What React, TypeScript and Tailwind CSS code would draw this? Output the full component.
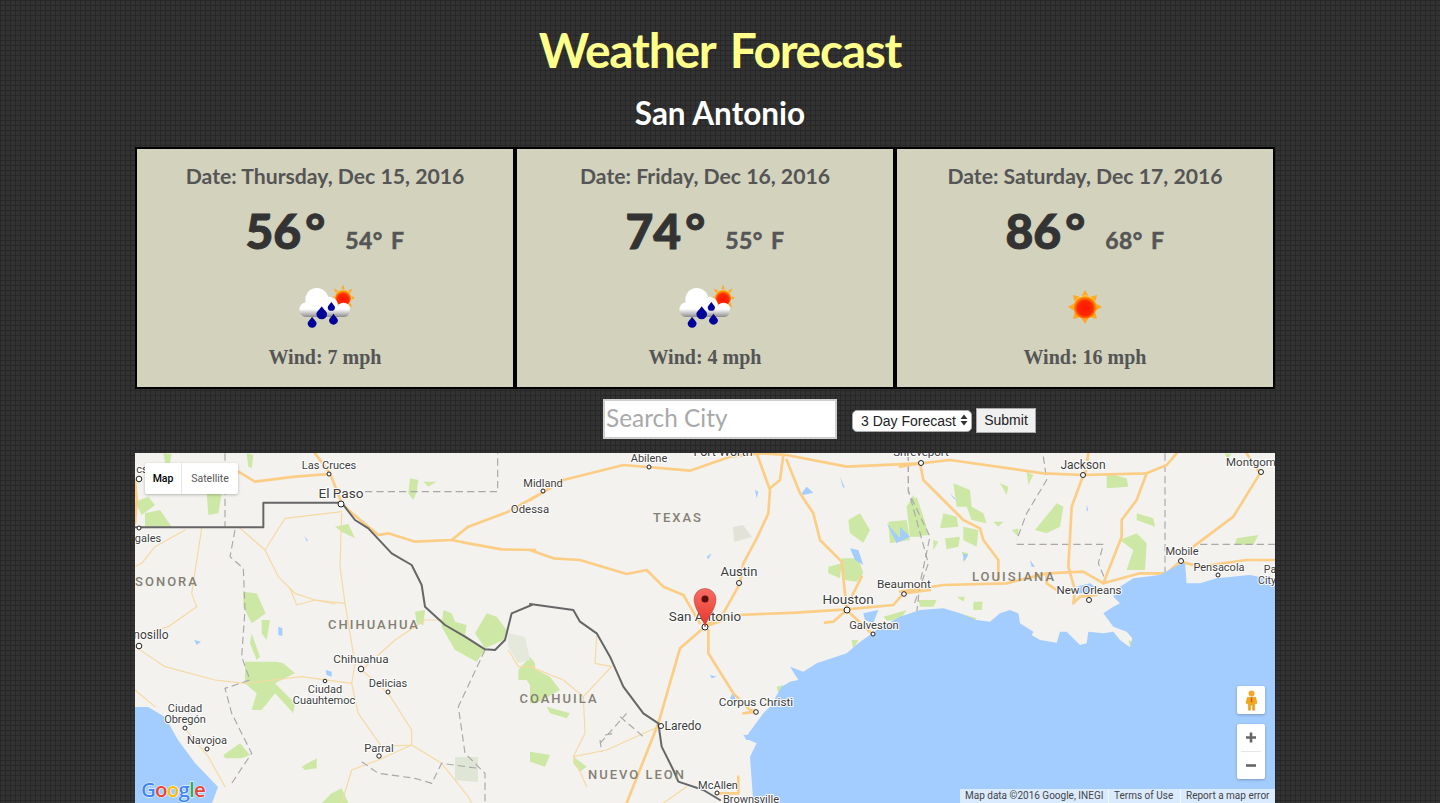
import React from "react";

const road = "#fccd84";
const minor = "#f6d9a2";
const green = "#cde8a4";
const water = "#a3ccff";

type G = { major: string[]; minor: string[]; green: string[]; dash: string[]; border: string[]; water: string[] };

const z4: G = {
  major: [
    "540,10 585,70 620,160 640,180 730,255 760,250 840,275 950,270 1000,230 1120,185 1200,140",
    "950,270 1000,280 1100,298 1200,300",
    "310,65 360,95 480,80 585,72",
    "0,90 5,150 0,220",
  ],
  minor: [
    "310,230 390,300 450,205 620,185",
    "390,300 430,380 480,430 540,450 630,460 615,350 620,190",
    "465,415 485,465 540,450 600,462",
    "630,460 660,640 650,700 670,790 740,890 830,885 830,840 760,730 680,660 780,570 870,510 920,510",
    "0,590 90,650 240,690 330,700 500,680 650,700",
    "200,235 170,430 185,470 100,530 0,560",
    "150,240 60,290 20,340 0,350",
    "830,885 920,940 1000,1040 1010,1059",
    "830,885 730,930 650,960 620,1059",
    "150,835 220,920 270,1010",
    "0,720 60,770",
    "1120,600 1150,650 1200,650",
  ],
  green: [
    "0,155 40,140 60,165 20,195",
    "30,190 75,180 110,230 30,230",
    "215,130 260,130 250,190 220,195",
    "335,10 355,15 350,55 340,50",
    "825,85 850,90 845,125 835,150 820,130",
    "865,95 905,95 880,110",
    "600,230 640,222 660,265 620,245",
    "325,425 365,430 392,490 350,520 325,470",
    "330,635 425,635 445,640 480,670 420,700 480,760 475,790 420,730 380,780 350,780 365,730 330,700",
    "920,530 925,480 950,490 960,515 995,525 990,555 1050,600 1025,635 960,600",
    "1020,550 1055,490 1085,500 1115,540 1105,570 1050,595",
    "840,485 870,480 865,525 845,520",
    "265,915 315,880 345,915 320,925 270,925",
    "1150,660 1185,620 1200,640 1200,730 1175,690 1150,690",
    "85,10 110,12 105,40 90,38",
    "380,510 405,510 395,570 380,550",
    "350,550 375,620 365,630 345,580",
    "500,950 545,925 545,955 510,960",
    "590,1030 620,1015 640,1059 560,1059",
  ],
  dash: [
    "270,10 270,230",
    "690,125 1088,125 1088,10",
    "300,240 285,320 325,355 330,480 320,620 345,690 270,715 290,790 350,910 290,1000",
    "1050,600 970,770 990,910 1050,970 1050,1059",
    "680,935 730,970 840,985 890,1000 920,940 1030,955",
  ],
  border: [
    "0,232 385,232 385,158 620,158 660,210 700,235 770,310 830,345 860,405 870,470 930,525 990,560 1050,598 1080,600 1110,570 1130,490 1190,465",
  ],
  water: [
    "430,530 442,535 442,558 430,555",
    "572,660 590,665 590,680 575,675",
    "178,570 198,575 185,585",
    "508,258 518,270 516,276",
  ],
};

const z5: G = {
  major: [
    "100,90 280,45 480,62 600,20 690,10 770,15 950,50 1170,40",
    "0,150 100,90",
    "680,10 720,120 715,190 680,265 640,340 630,400 580,490 525,530",
    "760,15 750,90 720,115",
    "770,30 810,130 850,190 870,270 935,335 950,480",
    "0,300 70,325 150,330 290,372 350,360 400,410 460,435 510,520",
    "525,530 620,495 800,488 950,478 1090,465 1120,430 1200,420",
    "525,530 450,595 385,820 290,1059",
    "535,540 535,610 610,730 660,780 680,785 640,790",
    "950,480 910,515 885,518",
    "950,480 1030,555",
    "950,470 995,380",
    "625,980 625,1030 560,1030",
  ],
  minor: [
    "200,560 195,640 245,650 160,740 165,850 130,920 170,1010",
    "385,830 230,900 130,920",
    "0,650 100,690 160,740",
    "470,1010 400,1059",
  ],
  green: [
    "955,210 990,190 1020,240 1000,278 960,250",
    "1075,215 1130,210 1140,270 1080,280",
    "1130,170 1150,135 1175,200 1195,255 1145,260",
    "895,350 935,340 930,385 895,370",
    "935,325 985,325 1000,370 980,395 945,390",
    "0,650 60,680 90,720 20,760 0,760",
    "50,770 120,790 110,805 60,790",
    "0,905 60,915 45,950 0,935",
    "130,920 170,950 150,965 130,940",
    "740,710 760,705 745,730",
    "965,570 985,570 970,600",
    "1060,500 1130,480 1110,510 1070,512",
  ],
  dash: [
    "1135,10 1135,120 1195,340 1150,470",
    "210,880 290,790",
    "270,800 340,860",
    "225,855 250,850",
    "210,870 215,905",
  ],
  border: ["0,462 130,480 150,515 200,550 240,620 280,710 340,790 385,820 395,890 430,960 445,995 520,1020 570,1050"],
  water: [
    "675,120 685,125 680,145",
    "815,130 830,110 850,128 820,135",
    "930,80 945,115 938,110",
    "960,295 985,300 1000,345 975,330",
    "1070,220 1110,265 1140,255 1100,280",
    "1000,490 1045,480 1030,520 1005,510",
    "530,320 545,310 535,328",
    "540,675 560,680 545,685",
    "640,855 665,855 680,870 650,870",
    "610,725 620,760 600,745",
  ],
};

const z6: G = {
  major: [
    "0,50 60,40 150,30 430,70 550,75 740,70 800,45 830,10",
    "60,40 70,90 130,150 190,210 240,235 250,270 295,330 295,390",
    "0,425 130,405 320,400 440,370 550,365 610,400 720,370 800,370 840,335 900,350 1040,330 1125,330",
    "550,75 515,170 505,350 525,420 520,460 540,440 590,435",
    "740,70 710,150 665,210 665,260 610,400",
    "880,290 1000,200 1080,70",
    "440,370 440,400 470,420",
    "1040,10 1060,40 1080,70",
    "565,10 555,75",
  ],
  minor: [],
  green: [
    "160,100 210,120 215,170 250,190 260,220 215,210 200,170 170,170",
    "130,190 170,200 175,230 120,235",
    "190,230 235,240 230,290 190,270",
    "135,265 180,260 175,290 140,298",
    "20,170 50,140 80,230 60,260 30,260",
    "405,240 470,160 490,170 480,230 440,250",
    "620,70 680,85 685,110 620,115",
    "710,190 760,205 765,230 710,210",
    "660,270 710,250 740,280 735,360 680,360 700,300",
    "1010,265 1075,255 1060,285 1005,285",
    "380,65 400,75 385,105",
    "300,100 325,110 320,135",
    "185,305 205,310 195,335",
    "280,215 310,215 295,230",
    "100,270 115,275 100,300",
    "335,240 355,235 355,260",
    "55,450 110,450 100,470 60,470",
    "220,455 248,455 245,480 220,480",
    "170,440 195,440 190,455",
    "180,490 230,505 225,510",
    "305,505 335,510 325,525",
    "975,10 995,12 980,30",
    "685,570 697,575 690,592",
  ],
  dash: [
    "25,10 25,125 90,260 60,400 50,490",
    "350,283 610,283 595,340 620,400",
    "795,10 795,415",
    "900,283 1125,283",
    "430,20 440,90 380,190 350,270",
  ],
  border: [],
  water: [
    "0,230 30,260 0,275",
    "150,130 170,150 160,145",
    "190,310 205,315 190,335",
    "560,165 565,180 560,185",
    "390,330 405,350 395,350",
    "530,410 570,400 600,420 560,430 530,430",
  ],
};

const gulf5 = [
  [670, 1059], [660, 920], [680, 880], [645, 865], [700, 790], [720, 770], [755, 710], [780, 695], [805, 690], [780, 650], [820, 665], [860, 640], [950, 610], [985, 580], [1040, 540], [1110, 500],
];
const gulf6 = [
  [60, 480], [130, 475], [180, 490], [230, 510], [270, 515], [300, 490], [330, 480], [355, 490], [360, 520], [400, 545], [395, 555], [420, 570], [470, 578], [480, 545], [500, 545], [540, 585], [560, 580], [565, 545], [610, 550], [640, 545], [660, 570], [690, 592], [697, 565], [680, 545], [640, 530], [610, 490], [640, 470], [660, 460], [640, 440], [660, 410], [700, 385], [780, 375], [835, 345], [855, 340], [860, 400], [900, 400], [950, 385], [1050, 375], [1125, 390],
];
const gulfPoints =
  gulf5.map(([x, y]) => `${530 + x / 3},${450 + y / 3}`).join(" ") +
  " " +
  gulf6.map(([x, y]) => `${900 + x / 3},${450 + y / 3}`).join(" ") +
  " 1275,803";

const Layer = ({ g, tx, layer }: { g: G; tx: number; layer: "fill" | "line" }) => (
  <g transform={`translate(${tx} 450) scale(0.33333)`} fill="none" strokeLinejoin="round" strokeLinecap="round">
    {layer === "fill" && (
      <>
        {g.green.map((p) => <polygon key={p} points={p} fill={green} />)}
        {g.water.map((p) => <polygon key={p} points={p} fill={water} />)}
      </>
    )}
    {layer === "line" && (
      <>
        {g.minor.map((p) => <polyline key={p} points={p} stroke={minor} strokeWidth={3.5} />)}
        {g.dash.map((p) => <polyline key={p} points={p} stroke="#a9a9a9" strokeWidth={3.5} strokeDasharray="22 12" strokeLinecap="butt" />)}
        {g.major.map((p) => <polyline key={p} points={p} stroke={road} strokeWidth={8} />)}
        {g.border.map((p) => <polyline key={p} points={p} stroke="#666" strokeWidth={6} />)}
      </>
    )}
  </g>
);

const labels: [string, number, number, number?][] = [
  ["Las Cruces", 329, 469],
  ["El Paso", 341, 498, 13.6],
  ["Midland", 543, 487],
  ["Odessa", 530, 513, 11.4],
  ["Abilene", 649, 462],
  ["Fort Worth", 723, 456, 12.5],
  ["Shreveport", 921, 456, 11.5],
  ["Jackson", 1083, 469, 12],
  ["Montgom", 1251, 466, 11.5],
  ["Mobile", 1182, 555],
  ["Pensacola", 1219, 571],
  ["Pa", 1270, 573, 10.5],
  ["City", 1267, 584, 10.5],
  ["Austin", 739, 576, 13],
  ["San Antonio", 705, 621, 13.4],
  ["Houston", 848, 604, 13.5],
  ["Beaumont", 904, 588, 11.8],
  ["Galveston", 874, 629, 11.2],
  ["New Orleans", 1089, 594, 11.5],
  ["Corpus Christi", 756, 706, 11.8],
  ["Laredo", 683, 730, 12],
  ["McAllen", 718, 789],
  ["Brownsville", 751, 803],
  ["Chihuahua", 361, 663, 11.7],
  ["Delicias", 388, 687],
  ["Ciudad", 325, 693],
  ["Cuauhtemoc", 324, 704],
  ["Parral", 379, 752, 11.2],
  ["Ciudad", 185, 712],
  ["Obregón", 185, 723],
  ["Navojoa", 207, 744],
  ["nosillo", 151, 639, 12],
  ["gales", 148, 542],
  ["cs", 142, 473],
];

const states: [string, number, number][] = [
  ["TEXAS", 678, 522],
  ["SONORA", 167, 586],
  ["CHIHUAHUA", 374, 629],
  ["COAHUILA", 559, 703],
  ["LOUISIANA", 1014, 581],
  ["NUEVO LEON", 637, 779],
];

const dots: [number, number, number][] = [
  [329, 474, 2], [341, 504, 3], [543, 491, 2], [649, 467, 2], [921, 463, 2.5], [1083, 475, 2.5], [1261, 472, 2.5],
  [1181, 561, 2.5], [1218, 575, 2], [1089, 600, 2.5], [739, 583, 2.5], [705, 627, 3], [847, 610, 3], [904, 594, 2.3],
  [873, 634, 2], [756, 712, 2.3], [661, 726, 2.5], [717, 793, 2], [361, 669, 2.8], [388, 692, 2], [325, 681, 1.8],
  [379, 756, 2.2], [185, 728, 2], [207, 749, 2], [139, 646, 2.8], [139, 528, 2], [139, 479, 2.8],
];

const MapDrawing = () => (
  <svg viewBox="135 453 1140 350" className="absolute inset-0 block h-full w-full bg-[#f3f2ef] [font-family:Roboto,sans-serif]">
    <Layer g={z4} tx={135} layer="fill" />
    <Layer g={z5} tx={530} layer="fill" />
    <Layer g={z6} tx={900} layer="fill" />
    <polygon fill="#e3e2d8" points="733,527 743,525 752,537 734,542" />
    <polygon fill="#e4e9dc" points="508,633 525,637 530,660 518,663 508,646" />
    <polygon fill="#dfe6d5" points="455,757 478,757 478,782 455,780" />
    <Layer g={z4} tx={135} layer="line" />
    <Layer g={z5} tx={530} layer="line" />
    <Layer g={z6} tx={900} layer="line" />
    <polygon fill={water} points={gulfPoints} />
    <polygon
      fill={water}
      points="135,707 148,707 165,717 178,740 195,763 218,787 212,803 135,803"
    />
    {labels.map(([t, x, y, s]) => (
      <text key={t + x} x={x} y={y} textAnchor="middle" fontSize={s ?? 11} fill="#333" stroke="#fff" strokeWidth={2} paintOrder="stroke" opacity={0.95}>
        {t}
      </text>
    ))}
    {states.map(([t, x, y]) => (
      <text key={t} x={x} y={y} textAnchor="middle" fontSize={13} fontWeight={500} letterSpacing={2} fill="#857f74">
        {t}
      </text>
    ))}
    {dots.map(([x, y, r]) => (
      <circle key={`${x}-${y}`} cx={x} cy={y} r={r} fill="#fff" stroke="#222" strokeWidth={1} />
    ))}
    <defs>
      <linearGradient id="pin" x1="0" y1="0" x2="0" y2="1">
        <stop offset="0" stopColor="#f76d63" />
        <stop offset="1" stopColor="#e5352a" />
      </linearGradient>
    </defs>
    <path d="M705 627 C703 618 694 609 694 599.5 A11 11 0 0 1 716 599.5 C716 609 707 618 705 627Z" fill="url(#pin)" stroke="#b53a30" strokeWidth={0.5} />
    <circle cx={705} cy={599} r={3.5} fill="#5c0f0a" />
    <text x={141} y={797} fontSize={20.5} fontFamily="'Open Sans',sans-serif" fontWeight={600} letterSpacing={-0.8} stroke="#fff" strokeWidth={1} paintOrder="stroke">
      <tspan fill="#4285f4">G</tspan>
      <tspan fill="#ea4335">o</tspan>
      <tspan fill="#fbbc05">o</tspan>
      <tspan fill="#4285f4">g</tspan>
      <tspan fill="#34a853">l</tspan>
      <tspan fill="#ea4335">e</tspan>
    </text>
  </svg>
);

const Sun = () => (
  <svg viewBox="0 0 36 36" className="h-[36px] w-[36px]">
    <defs>
      <radialGradient id="sunfill" cx="0.5" cy="0.55" r="0.55">
        <stop offset="0" stopColor="#ff1400" />
        <stop offset="0.6" stopColor="#ff2a00" />
        <stop offset="0.9" stopColor="#ffa000" />
        <stop offset="1" stopColor="#ffe7a0" />
      </radialGradient>
    </defs>
    {[0, 45, 90, 135, 180, 225, 270, 315].map((a) => (
      <polygon key={a} points="14.5,7 21.5,7 18,1" fill="#ffa726" transform={`rotate(${a} 18 18)`} />
    ))}
    <circle cx={18} cy={18} r={11.5} fill="url(#sunfill)" />
  </svg>
);

const Drop = ({ x, y, s }: { x: number; y: number; s: number }) => (
  <path
    d={`M${x} ${y - s * 1.25} C${x + s * 0.4} ${y - s * 0.6} ${x + s} ${y - s * 0.2} ${x + s} ${y + s * 0.2} A${s} ${s} 0 0 1 ${x - s} ${y + s * 0.2} C${x - s} ${y - s * 0.2} ${x - s * 0.4} ${y - s * 0.6} ${x} ${y - s * 1.25}Z`}
    fill="#03039a"
  />
);

const RainCloud = () => (
  <svg viewBox="0 0 52 44" className="ml-[2px] h-[47px] w-[56px]">
    <defs>
      <radialGradient id="sunfill2" cx="0.5" cy="0.6" r="0.55">
        <stop offset="0" stopColor="#ff1400" />
        <stop offset="0.65" stopColor="#ff2a00" />
        <stop offset="1" stopColor="#ffb000" />
      </radialGradient>
      <linearGradient id="cloud" x1="0" y1="0" x2="0" y2="1">
        <stop offset="0" stopColor="#fff" />
        <stop offset="0.72" stopColor="#fff" />
        <stop offset="0.9" stopColor="#b5b5b5" />
        <stop offset="1" stopColor="#8a8a8a" />
      </linearGradient>
    </defs>
    {[0, 45, 90, 135, 180, 225, 270, 315].map((a) => (
      <polygon key={a} points="40.5,5 43.5,5 42,0.5" fill="#ffa726" transform={`rotate(${a} 42 13)`} />
    ))}
    <circle cx={42} cy={13} r={7.5} fill="url(#sunfill2)" />
    <path
      d="M8 31 A7 7 0 0 1 1 24 A7 7 0 0 1 7 17 A10.5 10.5 0 0 1 28 12 A8 8 0 0 1 37 21 A6 6 0 0 1 48 26 A5 5 0 0 1 43 31 Z"
      fill="url(#cloud)"
    />
    <Drop x={22} y={27} s={5} />
    <Drop x={31} y={21} s={3.4} />
    <Drop x={13} y={36} s={4.2} />
    <Drop x={33} y={33} s={4.2} />
  </svg>
);

const Card = ({ date, hi, lo, wind, icon }: { date: string; hi: string; lo: string; wind: string; icon: React.ReactNode }) => (
  <div className="flex h-[242px] flex-col items-center border-2 border-black bg-[#d2d2bd] pt-[14px]">
    <div className="h-[26px] text-[21.2px] leading-[26px] font-bold text-[#555] [font-family:Lato,sans-serif]">{date}</div>
    <div className="mt-[12px] flex h-[60px] items-baseline [font-family:Lato,sans-serif]">
      <span className="text-[48px] leading-[60px] font-black text-[#333] [-webkit-text-stroke:1px_#333]">
        {hi}
        <span className="ml-[4px]">°</span>
      </span>
      <span className="ml-[20px] text-[23px] font-bold tracking-[0.5px] [word-spacing:2px] text-[#555] [-webkit-text-stroke:0.5px_#555]">{lo}° F</span>
    </div>
    <div className="mt-[23px] flex h-[46px] items-center justify-center">{icon}</div>
    <div className="mt-[15px] text-[20px] leading-[24px] font-bold text-[#555] [font-family:'Liberation_Serif',serif]">{wind}</div>
  </div>
);

export default function App() {
  return (
    <div className="h-[803px] overflow-hidden bg-[#323232] bg-[linear-gradient(#272727_1px,transparent_1px),linear-gradient(90deg,#272727_1px,transparent_1px)] bg-[length:5px_5px]">
      <h1 className="pt-[20px] text-center text-[48px] leading-[60px] font-bold tracking-[-1.3px] [word-spacing:5px] text-[#ffff8c] [font-family:Lato,sans-serif]">Weather Forecast</h1>
      <h2 className="mt-[13px] text-center text-[31.5px] leading-[40px] font-bold text-white [font-family:Lato,sans-serif]">San Antonio</h2>
      <div className="mt-[14px] ml-[135px] grid w-[1140px] grid-cols-3">
        <Card date="Date: Thursday, Dec 15, 2016" hi="56" lo="54" wind="Wind: 7 mph" icon={<RainCloud />} />
        <Card date="Date: Friday, Dec 16, 2016" hi="74" lo="55" wind="Wind: 4 mph" icon={<RainCloud />} />
        <Card date="Date: Saturday, Dec 17, 2016" hi="86" lo="68" wind="Wind: 16 mph" icon={<Sun />} />
      </div>
      <div className="mt-[10px] grid h-[40px] grid-cols-[1fr_234px_1fr] items-center">
        <div />
        <input
          placeholder="Search City"
          className="h-[40px] w-[234px] border-2 border-[#cfcfcf] bg-white px-[1px] pb-[3px] text-[24.4px] [font-family:Lato,sans-serif] placeholder:text-[#a9a9a9]"
        />
        <div className="ml-[15px] flex items-start gap-[4px] pt-[3px] [font-family:'Liberation_Sans',sans-serif]">
          <div className="relative mt-[1px] h-[22px] w-[120px]">
            <select className="h-full w-full appearance-none rounded-[5px] border border-[#aaa] bg-white pl-[8px] text-[14px] leading-[20px] text-[#222]">
              <option>3 Day Forecast</option>
            </select>
            <svg viewBox="0 0 8 12" className="absolute top-[5px] right-[4px] h-[12px] w-[8px]">
              <path d="M4 0.5 L7.5 5 H0.5Z M4 11.5 L7.5 7 H0.5Z" fill="#333" />
            </svg>
          </div>
          <button className="h-[25px] w-[60px] border border-[#aaa] bg-[#f0f0f0] text-[14px] text-[#222]">Submit</button>
        </div>
      </div>
      <div className="relative mt-[14px] ml-[135px] h-[350px] w-[1140px] overflow-hidden">
        <MapDrawing />
        <div className="absolute top-[10px] left-[10px] flex h-[31px] w-[93px] rounded-[2px] bg-white text-[10.5px] leading-[31px] shadow-[0_1px_3px_rgba(0,0,0,0.25)] [font-family:Roboto,sans-serif]">
          <div className="w-[37px] border-r border-[#e6e6e6] text-center font-medium text-black">Map</div>
          <div className="flex-1 text-center text-[#565656]">Satellite</div>
        </div>
        <div className="absolute top-[233px] right-[10px] flex h-[28px] w-[28px] items-center justify-center rounded-[2px] bg-white shadow-[0_1px_3px_rgba(0,0,0,0.25)]">
          <svg viewBox="0 0 14 22" className="h-[21px] w-[13px]">
            <circle cx={7} cy={3.5} r={3.2} fill="#f5a623" />
            <path d="M2.5 7.5 H11.5 L13 14 L10.5 14.5 V21.5 H8 V16 H6 V21.5 H3.5 V14.5 L1 14Z" fill="#f0a81c" stroke="#c98a10" strokeWidth={0.4} />
            <path d="M6.5 7.5 h1 L8 12 L7 13 L6 12Z" fill="#d9521e" />
          </svg>
        </div>
        <div className="absolute top-[271px] right-[10px] flex h-[55px] w-[28px] flex-col items-center rounded-[2px] bg-white shadow-[0_1px_3px_rgba(0,0,0,0.25)]">
          <svg viewBox="0 0 28 27" className="h-[27px] w-[28px]">
            <path d="M9 13.5 H19 M14 8.5 V18.5" stroke="#666" strokeWidth={2.6} />
          </svg>
          <div className="h-px w-[20px] bg-[#e6e6e6]" />
          <svg viewBox="0 0 28 27" className="h-[27px] w-[28px]">
            <path d="M9 13.5 H19" stroke="#666" strokeWidth={2.6} />
          </svg>
        </div>
        <div className="absolute right-0 bottom-0 flex h-[14px] bg-white/60 text-[10px] leading-[14px] text-[#444] [font-family:Roboto,sans-serif]">
          <div className="w-[149px] border-r border-white/70 pl-[5px]">Map data ©2016 Google, INEGI</div>
          <div className="w-[72px] border-r border-white/70 pl-[5px]">Terms of Use</div>
          <div className="w-[94px] pl-[5px]">Report a map error</div>
        </div>
      </div>
    </div>
  );
}
